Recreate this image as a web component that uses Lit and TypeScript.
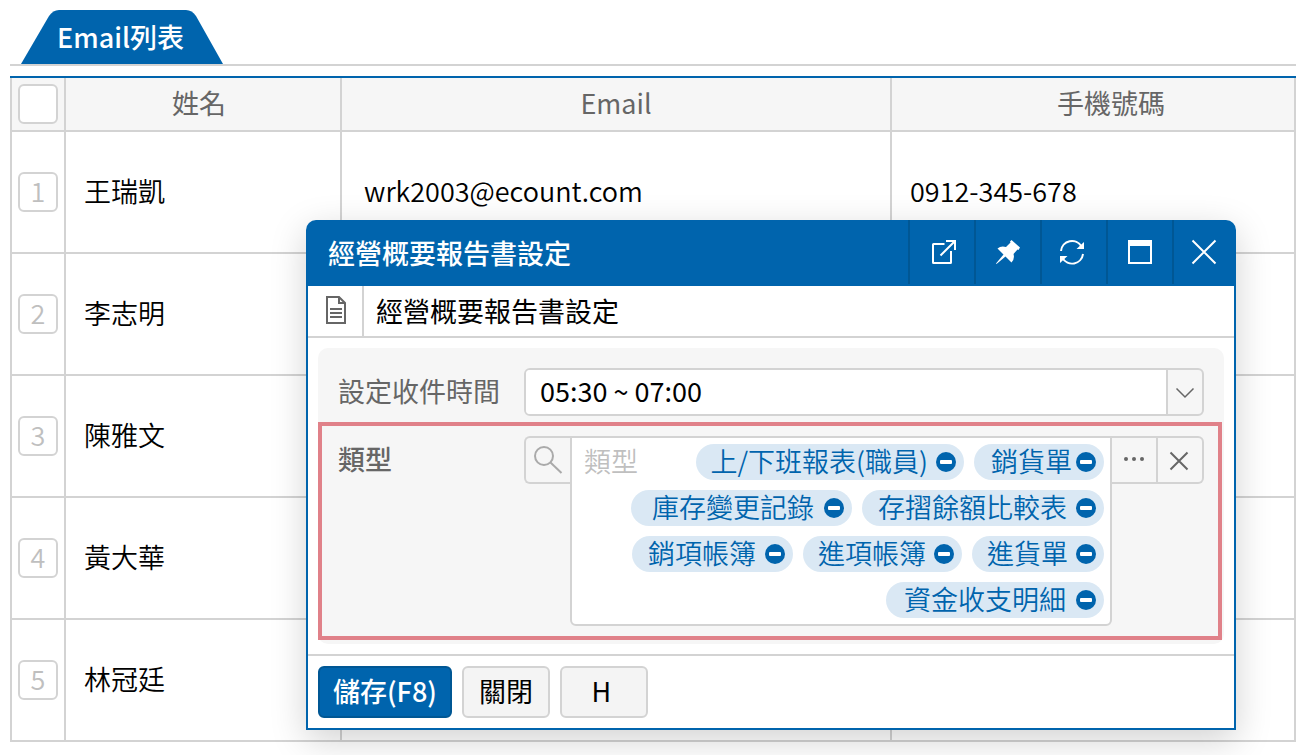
import { LitElement, html, css, svg } from "lit";
import { customElement, state } from "lit/decorators.js";
import { classMap } from "lit/directives/class-map.js";

interface Contact {
  name: string;
  email: string;
  phone: string;
}

interface Tag {
  text: string;
  fit?: "tight" | "even" | "roomy" | "wide";
}

const CONTACTS: Contact[] = [
  { name: "王瑞凱", email: "wrk2003@ecount.com", phone: "0912-345-678" },
  { name: "李志明", email: "", phone: "" },
  { name: "陳雅文", email: "", phone: "" },
  { name: "黃大華", email: "", phone: "" },
  { name: "林冠廷", email: "", phone: "" },
];

const baseStyles = css`
  * {
    box-sizing: border-box;
  }
  button,
  input,
  select {
    font: inherit;
    color: inherit;
    margin: 0;
    padding: 0;
    border: 0;
    background: none;
    border-radius: 0;
  }
  button {
    display: flex;
    align-items: center;
    justify-content: center;
    cursor: pointer;
  }
  svg {
    display: block;
    flex: none;
    overflow: visible;
  }
`;

@customElement("contact-table")
export class ContactTable extends LitElement {
  static styles = [
    baseStyles,
    css`
      :host {
        display: block;
      }
      .table {
        width: 100%;
        table-layout: fixed;
        border-collapse: separate;
        border-spacing: 0;
        border-top: 2px solid #0064ad;
      }
      .col-check {
        width: 56px;
      }
      .col-name {
        width: 276px;
      }
      .col-email {
        width: 550px;
      }
      th,
      td {
        padding: 0 0 2px;
        border-right: 2px solid #d3d3d3;
        border-bottom: 2px solid #d3d3d3;
        text-align: left;
      }
      th:first-child,
      td:first-child {
        padding: 0;
        border-left: 2px solid #d3d3d3;
      }
      th {
        height: 54px;
        background: #f6f6f6;
        color: #666;
        font-weight: 400;
        text-align: center;
      }
      td {
        height: 122px;
        font-weight: 350;
      }
      .head-name {
        padding-right: 8px;
      }
      .head-phone {
        padding-left: 36px;
      }
      .name,
      .phone {
        padding-left: 18px;
      }
      .email {
        padding-left: 22px;
      }
      .box {
        appearance: none;
        display: flex;
        width: 40px;
        height: 40px;
        margin: 0 auto;
        padding-bottom: 2px;
        border: 2px solid #d3d3d3;
        border-radius: 6px;
        background: #fff;
        color: #bfbfbf;
      }
    `,
  ];

  render() {
    return html`
      <table class="table">
        <colgroup>
          <col class="col-check" />
          <col class="col-name" />
          <col class="col-email" />
          <col />
        </colgroup>
        <thead>
          <tr>
            <th><input class="box" type="checkbox" aria-label="全選" /></th>
            <th class="head-name">姓名</th>
            <th>Email</th>
            <th class="head-phone">手機號碼</th>
          </tr>
        </thead>
        <tbody>
          ${CONTACTS.map(
            (c, i) => html`<tr>
              <td><button class="box" type="button">${i + 1}</button></td>
              <td class="name">${c.name}</td>
              <td class="email">${c.email}</td>
              <td class="phone">${c.phone}</td>
            </tr>`
          )}
        </tbody>
      </table>
    `;
  }
}

const popoutIcon = svg`<svg width="26" height="26" viewBox="-2 0 26 26" fill="none" stroke="#fff" stroke-width="2">
  <path d="M13.500 5H2.500Q2 5 2 5.500V23.500Q2 24 2.500 24H19.500Q20 24 20 23.500V12"/>
  <path d="M15 2H24V11M24 2L9.500 16.500"/></svg>`;

const pinIcon = svg`<svg width="26" height="26" viewBox="0 0 26 26" fill="#fff">
  <path d="M16.500 1L25 8.500L23.500 11L22.500 10.500L18.500 15Q20 20 16.500 23.500L10.500 17.500L1.500 25L1 24.500L8.500 15.500L2.500 9.500Q6 6.500 11 8L15.500 3.500L15 2.500Z"/></svg>`;

const refreshIcon = svg`<svg width="26" height="26" viewBox="2 0 26 26" fill="none" stroke="#fff" stroke-width="2">
  <path d="M2 12A11 11 0 0 1 22.500 7.500"/><path d="M24 15A11 11 0 0 1 3.500 19"/>
  <path d="M25 3V10H17.500ZM1 24V17H8.500Z" fill="#fff" stroke="none"/></svg>`;

const windowIcon = svg`<svg width="26" height="26" viewBox="0 0 26 26">
  <path fill="#fff" fill-rule="evenodd" d="M1 1H25V25H1ZM3 7V23H23V7Z"/></svg>`;

const closeIcon = svg`<svg width="26" height="26" viewBox="0 0 26 26" fill="none" stroke="#fff" stroke-width="2">
  <path d="M1.500 1.500L24.500 24.500M24.500 1.500L1.500 24.500"/></svg>`;

const documentIcon = svg`<svg width="20" height="28" viewBox="-1 0 20 28" fill="none" stroke="#666" stroke-width="2">
  <path d="M1 1H13L19 7V27H1Z"/><path d="M13 1V7H19"/><path d="M4 13H16M4 17H16M4 21H16"/></svg>`;

const searchIcon = svg`<svg width="28" height="28" viewBox="0 0 28 28" fill="none" stroke="#aaa" stroke-width="2">
  <circle cx="10" cy="10" r="9"/><path d="M16.500 16.500L27.500 27"/></svg>`;

const moreIcon = svg`<svg width="22" height="6" viewBox="0 0 22 6" fill="#666">
  <circle cx="3" cy="3" r="2"/><circle cx="11" cy="3" r="2"/><circle cx="19" cy="3" r="2"/></svg>`;

const clearIcon = svg`<svg width="20" height="20" viewBox="1 -1 20 20" fill="none" stroke="#666" stroke-width="2">
  <path d="M1.500 1.500L18.500 18.500M18.500 1.500L1.500 18.500"/></svg>`;

const chevronIcon = svg`<svg width="20" height="12" viewBox="0 1 20 12" fill="none" stroke="#666" stroke-width="1.500">
  <path d="M1.500 1.500L10 10L18.500 1.500"/></svg>`;

const minusIcon = svg`<svg width="20" height="20" viewBox="0 0 20 20">
  <circle cx="10" cy="10" r="10" fill="#0064ad"/><rect x="4" y="8" width="12" height="4" rx="1" fill="#fff"/></svg>`;

@customElement("report-dialog")
export class ReportDialog extends LitElement {
  static styles = [
    baseStyles,
    css`
      :host {
        display: block;
        border-radius: 10px 10px 0 0;
        box-shadow: 0 10px 36px rgba(0, 0, 0, 0.18);
      }
      .titlebar {
        display: flex;
        height: 66px;
        padding-bottom: 2px;
        padding-right: 2px;
        border-radius: 10px 10px 0 0;
        background: #0064ad;
        color: #fff;
      }
      .title {
        flex: 1;
        margin: 0;
        padding-left: 22px;
        font-size: 27px;
        font-weight: 500;
        line-height: 66px;
      }
      .tool {
        width: 66px;
        border-left: 2px solid #005794;
      }
      .tool:last-child {
        width: 62px;
      }
      .body {
        border: 2px solid #0064ad;
        border-top: 0;
        background: #fff;
      }
      .subhead {
        display: flex;
        height: 52px;
        border-bottom: 2px solid #d3d3d3;
      }
      .doc {
        display: flex;
        align-items: center;
        justify-content: center;
        width: 56px;
        padding-bottom: 2px;
        border-right: 2px solid #d3d3d3;
      }
      .subtitle {
        margin: 0;
        padding-left: 12px;
        font-size: 27px;
        font-weight: 400;
        line-height: 50px;
      }
      .panel {
        margin: 10px;
        padding: 20px 0 4px;
        border-radius: 10px;
        background: #f6f6f6;
      }
      .row {
        display: flex;
        align-items: flex-start;
        padding: 0 20px;
      }
      .label {
        flex: none;
        width: 186px;
        color: #666;
        line-height: 46px;
      }
      .label-strong {
        font-weight: 500;
      }
      .picker {
        flex: 1;
        display: grid;
        grid-template-columns: 1fr 36px;
        height: 48px;
        overflow: hidden;
        border: 2px solid #d3d3d3;
        border-radius: 6px;
        background: #f6f6f6;
      }
      .select {
        grid-area: 1 / 1 / 2 / 3;
        appearance: none;
        width: 100%;
        height: 44px;
        padding: 0 0 2px 14px;
        background: linear-gradient(#fff, #fff) no-repeat 0 0 / calc(100% - 36px) 100%;
      }
      .chevron {
        grid-area: 1 / 2;
        display: flex;
        align-items: center;
        justify-content: center;
        padding-top: 4px;
        border-left: 2px solid #d3d3d3;
        pointer-events: none;
      }
      .highlight {
        margin: 6px 2px 0 0;
        padding: 10px 14px 10px 16px;
        border: 4px solid #e08189;
      }
      .square {
        flex: none;
        height: 48px;
        border: 2px solid #d3d3d3;
      }
      .search {
        width: 46px;
        border-right: 0;
        border-radius: 6px 0 0 6px;
      }
      .more {
        width: 46px;
        padding-bottom: 2px;
        border-left: 0;
      }
      .clear {
        width: 46px;
        border-left: 0;
        border-radius: 0 6px 6px 0;
      }
      .tags {
        flex: 1;
        display: flex;
        flex-wrap: wrap;
        justify-content: flex-end;
        gap: 10px;
        padding: 6px 6px 6px 12px;
        border: 2px solid #d3d3d3;
        border-radius: 0 0 6px 6px;
        background: #fff;
      }
      .entry {
        flex: 1 1 60px;
        min-width: 0;
        height: 36px;
        padding-bottom: 2px;
        outline: 0;
        font-weight: 350;
      }
      .entry::placeholder {
        color: #bfbfbf;
        opacity: 1;
      }
      .tag {
        display: flex;
        align-items: center;
        gap: 8px;
        height: 36px;
        padding: 0 8px 0 15px;
        border-radius: 18px;
        background: #dae8f4;
        color: #0064ad;
        font-weight: 350;
        white-space: nowrap;
      }
      .tag-text {
        padding-bottom: 2px;
        line-height: 34px;
      }
      .tight {
        gap: 4px;
        padding-left: 17px;
      }
      .even {
        gap: 9px;
        padding-left: 16px;
      }
      .roomy {
        gap: 10px;
        padding-left: 18px;
      }
      .wide {
        gap: 10px;
        padding-left: 21px;
      }
      .footer {
        display: flex;
        gap: 10px;
        padding: 10px;
        border-top: 2px solid #d3d3d3;
      }
      .action {
        min-width: 88px;
        height: 52px;
        padding: 0 13px 2px;
        border: 2px solid #d3d3d3;
        border-radius: 6px;
        background: #f4f4f4;
      }
      .primary {
        border-color: #005794;
        background: #0064ad;
        color: #fff;
        font-weight: 500;
      }
      .key {
        padding-right: 18px;
      }
    `,
  ];

  @state() private tags: Tag[] = [
    { text: "上/下班報表(職員)" },
    { text: "銷貨單", fit: "tight" },
    { text: "庫存變更記錄", fit: "wide" },
    { text: "存摺餘額比較表", fit: "even" },
    { text: "銷項帳簿", fit: "even" },
    { text: "進項帳簿" },
    { text: "進貨單" },
    { text: "資金收支明細", fit: "roomy" },
  ];

  private remove(tag: Tag) {
    this.tags = this.tags.filter((t) => t !== tag);
  }

  render() {
    return html`
      <header class="titlebar">
        <h1 class="title">經營概要報告書設定</h1>
        <button class="tool" type="button" aria-label="新視窗">${popoutIcon}</button>
        <button class="tool" type="button" aria-label="釘選">${pinIcon}</button>
        <button class="tool" type="button" aria-label="重新整理">${refreshIcon}</button>
        <button class="tool" type="button" aria-label="最大化">${windowIcon}</button>
        <button class="tool" type="button" aria-label="關閉視窗">${closeIcon}</button>
      </header>
      <div class="body">
        <div class="subhead">
          <span class="doc">${documentIcon}</span>
          <h2 class="subtitle">經營概要報告書設定</h2>
        </div>
        <div class="panel">
          <div class="row">
            <label class="label" for="time">設定收件時間</label>
            <div class="picker">
              <select class="select" id="time">
                <option>05:30 ~ 07:00</option>
              </select>
              <span class="chevron">${chevronIcon}</span>
            </div>
          </div>
          <div class="row highlight">
            <label class="label label-strong" for="kind">類型</label>
            <button class="square search" type="button" aria-label="搜尋">${searchIcon}</button>
            <div class="tags">
              <input class="entry" id="kind" type="text" placeholder="類型" />
              ${this.tags.map(
                (t) => html`<span class=${classMap({ tag: true, [t.fit ?? "normal"]: true })}>
                  <span class="tag-text">${t.text}</span>
                  <button type="button" aria-label="移除 ${t.text}" @click=${() => this.remove(t)}>
                    ${minusIcon}
                  </button>
                </span>`
              )}
            </div>
            <button class="square more" type="button" aria-label="更多">${moreIcon}</button>
            <button class="square clear" type="button" aria-label="清除" @click=${() => (this.tags = [])}>
              ${clearIcon}
            </button>
          </div>
        </div>
        <footer class="footer">
          <button class="action primary" type="button">儲存(F8)</button>
          <button class="action" type="button">關閉</button>
          <button class="action key" type="button">H</button>
        </footer>
      </div>
    `;
  }
}

@customElement("app-root")
export class AppRoot extends LitElement {
  static styles = [
    baseStyles,
    css`
      :host {
        display: block;
        position: relative;
        padding: 10px 10px 13px;
        background: #fff;
        color: #000;
        font-family: "Noto Sans CJK TC", "Noto Sans", sans-serif;
        font-size: 27px;
        line-height: 40px;
      }
      .tabs {
        display: flex;
        margin-bottom: 10px;
        padding-left: 11px;
        border-bottom: 2px solid #d3d3d3;
      }
      .tab {
        width: 202px;
        height: 54px;
        padding-left: 36px;
        background: #0064ad;
        clip-path: path("M0 54L28 6Q32 0 38 0H165Q171 0 175 6L202 54Z");
        color: #fff;
        font-weight: 500;
        line-height: 54px;
        text-decoration: none;
      }
      .dialog {
        position: absolute;
        top: 220px;
        left: 306px;
        right: 70px;
      }
    `,
  ];

  render() {
    return html`
      <nav class="tabs"><a class="tab" href="#">Email列表</a></nav>
      <contact-table></contact-table>
      <report-dialog class="dialog"></report-dialog>
    `;
  }
}
